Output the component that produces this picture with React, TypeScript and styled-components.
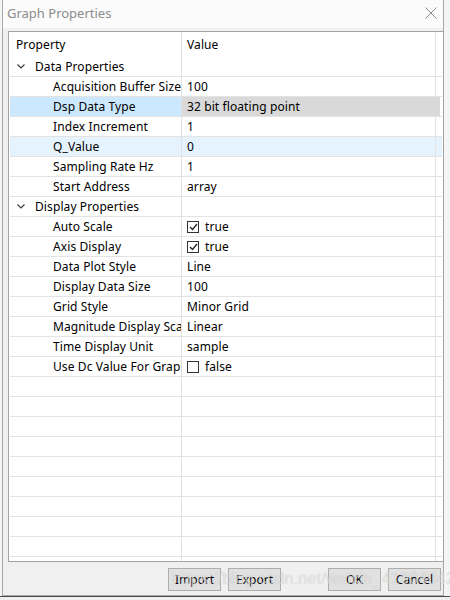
import React from "react";
import styled, { createGlobalStyle } from "styled-components";

const Global = createGlobalStyle`
  html, body { margin: 0; padding: 0; }
  body {
    background: #f3f3f3;
    font-family: "Noto Sans", "Noto Sans CJK SC", sans-serif;
    font-size: 12px;
    color: #000;
  }
`;

const Page = styled.div`
  width: 450px;
  height: 600px;
  overflow: hidden;
  position: relative;
  background: #f5f5f5;
`;

const Dialog = styled.div`
  margin-left: 2px;
  width: 440px;
  height: 595px;
  border: 1px solid #a8a8a8;
  border-top: none;
  background: #f0f0f0;
  display: flex;
  flex-direction: column;
  position: relative;
`;

const TitleBar = styled.div`
  height: 28px;
  background: #fbfbfb;
  display: flex;
  align-items: center;
  justify-content: space-between;
  padding: 0 6px 2px 4px;
  box-sizing: border-box;
`;

const Title = styled.span`
  font-size: 13px;
  color: #8c8c8c;
`;

const Body = styled.div`
  flex: 1;
  display: flex;
  flex-direction: column;
  padding: 3px 0 0 5px;
`;

const Grid = styled.div`
  width: 432px;
  height: 529px;
  border: 1px solid #a3a3a3;
  background: #fff;
  padding: 0 1px;
  box-sizing: content-box;
  overflow: hidden;
  letter-spacing: 0.1px;
`;

const Row = styled.div<{ $h?: number; $bg?: string; $line?: boolean }>`
  display: grid;
  grid-template-columns: 172px 254px 4px;
  height: ${(p) => p.$h ?? 20}px;
  background: ${(p) => p.$bg ?? "transparent"};
  border-bottom: ${(p) => (p.$line === false ? "none" : "1px solid #e3e3e3")};
  box-sizing: border-box;
`;

const NameCell = styled.div<{ $indent: number; $bg?: string }>`
  border-right: 1px solid #e0e0e0;
  padding-left: ${(p) => p.$indent}px;
  display: flex;
  align-items: center;
  white-space: nowrap;
  overflow: hidden;
  background: ${(p) => p.$bg ?? "transparent"};
`;

const ValueCell = styled.div<{ $bg?: string }>`
  padding-left: 5px;
  display: flex;
  align-items: center;
  gap: 6px;
  white-space: nowrap;
  overflow: hidden;
  border-right: 1px solid ${(p) => p.$bg ?? "#e3e3e3"};
  background: ${(p) => p.$bg ?? "transparent"};
`;

const Filler = styled.div<{ $bg?: string }>`
  background: ${(p) => p.$bg ?? "transparent"};
`;

const Chevron = styled.svg`
  width: 8px;
  height: 5px;
  margin-right: 10px;
  flex: none;
`;

const Box = styled.span`
  width: 10px;
  height: 10px;
  border: 1px solid #333;
  background: #fff;
  display: inline-flex;
  align-items: center;
  justify-content: center;
  flex: none;
`;

const Footer = styled.div`
  display: flex;
  align-items: center;
  padding: 6px 2px 0 160px;
  gap: 7px;
`;

const Button = styled.button<{ $gapLeft?: number }>`
  width: 53px;
  height: 23px;
  margin-left: ${(p) => p.$gapLeft ?? 0}px;
  background: #e1e1e1;
  border: 1px solid #adadad;
  font-family: "Noto Sans", "Noto Sans CJK SC", sans-serif;
  font-size: 12px;
  color: #000;
  padding: 0;
  line-height: 1;
`;

const Watermark = styled.div`
  position: absolute;
  left: 172px;
  top: 570px;
  font-family: "Liberation Sans", sans-serif;
  font-size: 16px;
  color: rgba(255, 255, 255, 0.5);
  text-shadow: 0 0 1px rgba(120, 120, 120, 0.4);
  letter-spacing: 0.3px;
  pointer-events: none;
  white-space: nowrap;
`;

const BottomStrip = styled.div`
  position: absolute;
  left: 0;
  right: 0;
  top: 596px;
  height: 4px;
  border-top: 1px solid #4a4a4a;
  background: #f0f0f0;
`;

type Item =
  | { kind: "group"; name: string }
  | { kind: "prop"; name: string; value: string; check?: boolean; sel?: "dsp" | "hover" };

const items: Item[] = [
  { kind: "group", name: "Data Properties" },
  { kind: "prop", name: "Acquisition Buffer Size", value: "100" },
  { kind: "prop", name: "Dsp Data Type", value: "32 bit floating point", sel: "dsp" },
  { kind: "prop", name: "Index Increment", value: "1" },
  { kind: "prop", name: "Q_Value", value: "0", sel: "hover" },
  { kind: "prop", name: "Sampling Rate Hz", value: "1" },
  { kind: "prop", name: "Start Address", value: "array" },
  { kind: "group", name: "Display Properties" },
  { kind: "prop", name: "Auto Scale", value: "true", check: true },
  { kind: "prop", name: "Axis Display", value: "true", check: true },
  { kind: "prop", name: "Data Plot Style", value: "Line" },
  { kind: "prop", name: "Display Data Size", value: "100" },
  { kind: "prop", name: "Grid Style", value: "Minor Grid" },
  { kind: "prop", name: "Magnitude Display Scale", value: "Linear" },
  { kind: "prop", name: "Time Display Unit", value: "sample" },
  { kind: "prop", name: "Use Dc Value For Graph", value: "false", check: false },
];

const Check = () => (
  <svg width="9" height="8" viewBox="0 0 9 8">
    <path d="M1 4 L3.5 6.5 L8 1" fill="none" stroke="#222" strokeWidth="1.3" />
  </svg>
);

export default function App() {
  return (
    <Page>
      <Global />
      <Dialog>
        <TitleBar>
          <Title>Graph Properties</Title>
          <svg width="12" height="12" viewBox="0 0 12 12">
            <path d="M0.5 0.5 L11.5 11.5 M11.5 0.5 L0.5 11.5" stroke="#8a8a8a" strokeWidth="1" />
          </svg>
        </TitleBar>
        <Body>
          <Grid>
            <Row $h={25} $line={false}>
              <NameCell $indent={6}>Property</NameCell>
              <ValueCell>Value</ValueCell>
              <Filler />
            </Row>
            {items.map((it, i) => {
              if (it.kind === "group") {
                return (
                  <Row key={i}>
                    <NameCell $indent={7}>
                      <Chevron viewBox="0 0 8 5">
                        <path d="M0.5 0.5 L4 4 L7.5 0.5" fill="none" stroke="#333" strokeWidth="1.1" />
                      </Chevron>
                      {it.name}
                    </NameCell>
                    <ValueCell />
                    <Filler />
                  </Row>
                );
              }
              const rowBg = it.sel === "hover" ? "#e5f3ff" : undefined;
              const nameBg = it.sel === "dsp" ? "#cce8ff" : undefined;
              const valBg = it.sel === "dsp" ? "#d9d9d9" : undefined;
              return (
                <Row key={i} $bg={rowBg}>
                  <NameCell $indent={43} $bg={nameBg}>{it.name}</NameCell>
                  <ValueCell $bg={valBg}>
                    {it.check !== undefined && <Box>{it.check && <Check />}</Box>}
                    {it.value}
                  </ValueCell>
                  <Filler $bg={valBg} />
                </Row>
              );
            })}
            {Array.from({ length: 9 }).map((_, i) => (
              <Row key={"e" + i}>
                <NameCell $indent={0} />
                <ValueCell />
                <Filler />
              </Row>
            ))}
            <Row $h={10} $line={false}>
              <NameCell $indent={0} />
              <ValueCell />
              <Filler />
            </Row>
          </Grid>
          <Footer>
            <Button>Import</Button>
            <Button>Export</Button>
            <Button $gapLeft={40}>OK</Button>
            <Button>Cancel</Button>
          </Footer>
        </Body>
      </Dialog>
      <Watermark>https://blog.csdn.net/weixin_41904042</Watermark>
      <BottomStrip />
    </Page>
  );
}
